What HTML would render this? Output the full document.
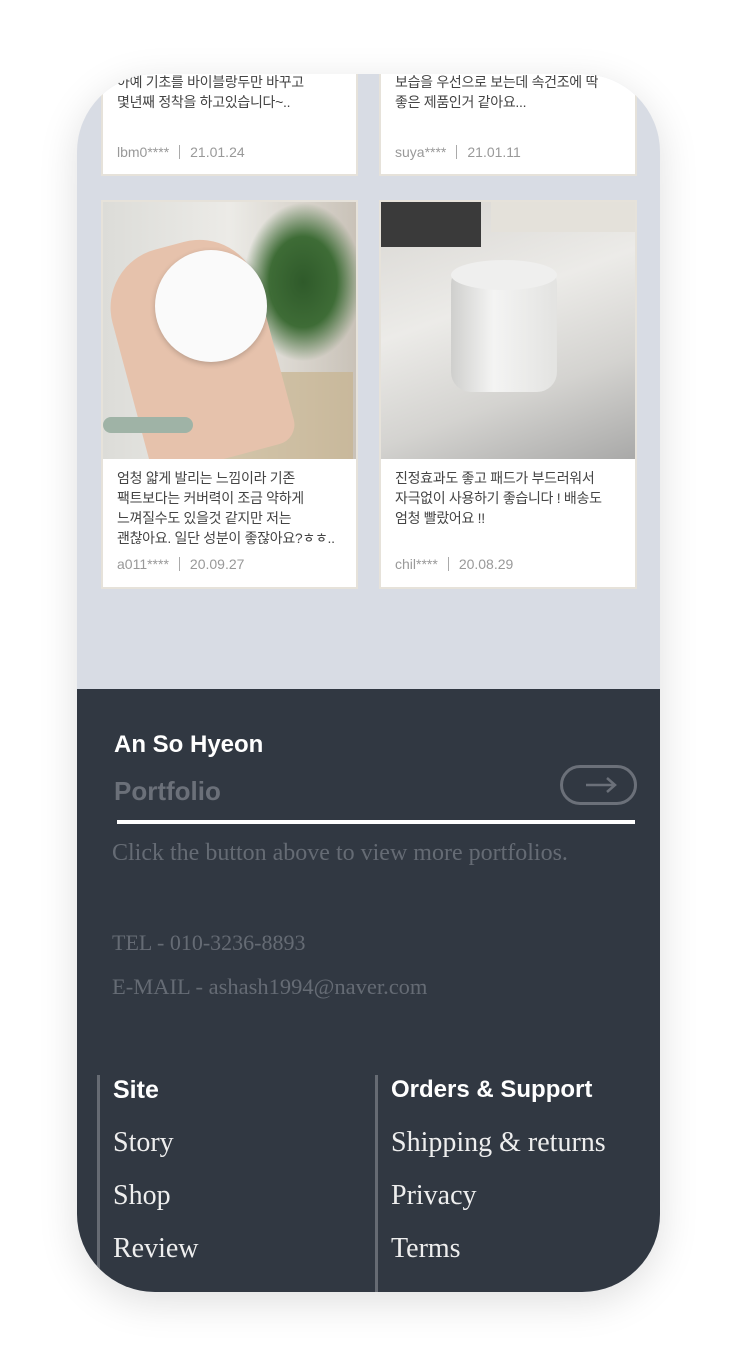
<!DOCTYPE html>
<html><head><meta charset="utf-8"><style>
*{margin:0;padding:0;box-sizing:border-box}
body{width:738px;height:1371px;background:#fff;position:relative;overflow:hidden;font-family:"Liberation Sans","Noto Sans CJK KR",sans-serif}
.frame{position:absolute;left:77px;top:74px;width:583px;height:1218px;border-radius:78px;overflow:hidden;background:#d8dce4;box-shadow:0 10px 40px rgba(0,0,0,.13)}
.card{position:absolute;background:#fff;border:2px solid #e6e2da}
.txt{position:absolute;left:14px;font-size:14px;line-height:20px;color:#444;letter-spacing:-.3px}
.meta{position:absolute;left:14px;font-size:14px;color:#999}
.meta span{display:inline-block;width:1px;height:14px;background:#aaa;margin:0 10px;vertical-align:-2px}
.foot{position:absolute;left:0;top:615px;width:583px;height:603px;background:#313842}
.serif{font-family:"Liberation Serif",serif}
.col{position:absolute;top:386px;height:230px;border-left:3px solid #666b73}
.col div{position:absolute;left:13px;white-space:nowrap}
</style></head><body>
<div class="frame">
 <div class="card" style="left:24px;top:-10px;width:257px;height:112px">
  <div class="txt" style="top:6px">아예 기초를 바이블랑두만 바꾸고<br>몇년째 정착을 하고있습니다~..</div>
  <div class="meta" style="top:78px">lbm0****<span></span>21.01.24</div>
 </div>
 <div class="card" style="left:302px;top:-10px;width:258px;height:112px">
  <div class="txt" style="top:6px">보습을 우선으로 보는데 속건조에 딱<br>좋은 제품인거 같아요...</div>
  <div class="meta" style="top:78px">suya****<span></span>21.01.11</div>
 </div>
 <div class="card" style="left:24px;top:126px;width:257px;height:389px">
  <div style="position:absolute;left:0;top:0;width:253px;height:257px;background:linear-gradient(90deg,#dcdcd8 0%,#ecebe7 50%,#c9c2b8 100%);overflow:hidden">
   <div style="position:absolute;left:140px;top:0;width:120px;height:160px;background:radial-gradient(ellipse at 50% 50%,#2f5a2a 0%,#3e6c36 40%,transparent 70%)"></div>
   <div style="position:absolute;left:60px;top:170px;width:190px;height:90px;background:#c8b48f;opacity:.7"></div>
   <div style="position:absolute;left:20px;top:40px;width:150px;height:220px;border-radius:60px 60px 20px 20px;background:#e6c2ac;transform:rotate(-15deg)"></div>
   <div style="position:absolute;left:52px;top:48px;width:112px;height:112px;border-radius:50%;background:#fafafa;box-shadow:0 2px 6px rgba(0,0,0,.2)"></div>
   <div style="position:absolute;left:0;top:215px;width:90px;height:16px;border-radius:8px;background:#9fb3a6"></div>
  </div>
  <div class="txt" style="top:266px">엄청 얇게 발리는 느낌이라 기존<br>팩트보다는 커버력이 조금 약하게<br>느껴질수도 있을것 같지만 저는<br>괜찮아요. 일단 성분이 좋잖아요?ㅎㅎ..</div>
  <div class="meta" style="top:354px">a011****<span></span>20.09.27</div>
 </div>
 <div class="card" style="left:302px;top:126px;width:258px;height:389px">
  <div style="position:absolute;left:0;top:0;width:254px;height:257px;background:linear-gradient(160deg,#d8d6d2 0%,#ecebe8 40%,#d4d3d0 70%,#a9a9a8 100%);overflow:hidden">
   <div style="position:absolute;left:0;top:0;width:100px;height:45px;background:#3a3a3a"></div>
   <div style="position:absolute;left:110px;top:0;width:144px;height:30px;background:#e4e1da"></div>
   <div style="position:absolute;left:70px;top:62px;width:106px;height:128px;border-radius:20px;background:linear-gradient(90deg,#cfcfcd,#f4f4f3 40%,#e3e3e1)"></div>
   <div style="position:absolute;left:70px;top:58px;width:106px;height:30px;border-radius:50%;background:#efefee"></div>
  </div>
  <div class="txt" style="top:266px">진정효과도 좋고 패드가 부드러워서<br>자극없이 사용하기 좋습니다 ! 배송도<br>엄청 빨랐어요 !!</div>
  <div class="meta" style="top:354px">chil****<span></span>20.08.29</div>
 </div>
 <div class="foot">
  <div style="position:absolute;left:37px;top:42px;font-size:24px;font-weight:bold;color:#fff">An So Hyeon</div>
  <div style="position:absolute;left:37px;top:87px;font-size:26px;font-weight:bold;color:#6b7079">Portfolio</div>
  <div style="position:absolute;left:483px;top:76px;width:77px;height:40px;border:3px solid #6b7079;border-radius:20px"><svg width="71" height="34" viewBox="0 0 71 34" style="position:absolute;left:0;top:0"><path d="M23 17H52M44 10L52 17L44 24" stroke="#6b7079" stroke-width="2.5" fill="none"/></svg></div>
  <div style="position:absolute;left:40px;top:131px;width:518px;height:4px;background:#fff"></div>
  <div class="serif" style="position:absolute;left:35px;top:151px;font-size:24px;color:#656b74">Click the button above to view more portfolios.</div>
  <div class="serif" style="position:absolute;left:35px;top:241px;font-size:22px;color:#656b74">TEL - 010-3236-8893</div>
  <div class="serif" style="position:absolute;left:35px;top:285px;font-size:22.5px;color:#656b74">E-MAIL - ashash1994@naver.com</div>
  <div class="col" style="left:20px">
   <div style="top:1px;font-size:25px;font-weight:bold;color:#fff">Site</div>
   <div class="serif" style="top:52px;font-size:28px;color:#eee">Story</div>
   <div class="serif" style="top:105px;font-size:28px;color:#eee">Shop</div>
   <div class="serif" style="top:158px;font-size:28px;color:#eee">Review</div>
  </div>
  <div class="col" style="left:298px">
   <div style="top:1px;font-size:24px;font-weight:bold;color:#fff">Orders &amp; Support</div>
   <div class="serif" style="top:52px;font-size:28px;color:#eee">Shipping &amp; returns</div>
   <div class="serif" style="top:105px;font-size:28px;color:#eee">Privacy</div>
   <div class="serif" style="top:158px;font-size:28px;color:#eee">Terms</div>
  </div>
 </div>
</div>
</body></html>
